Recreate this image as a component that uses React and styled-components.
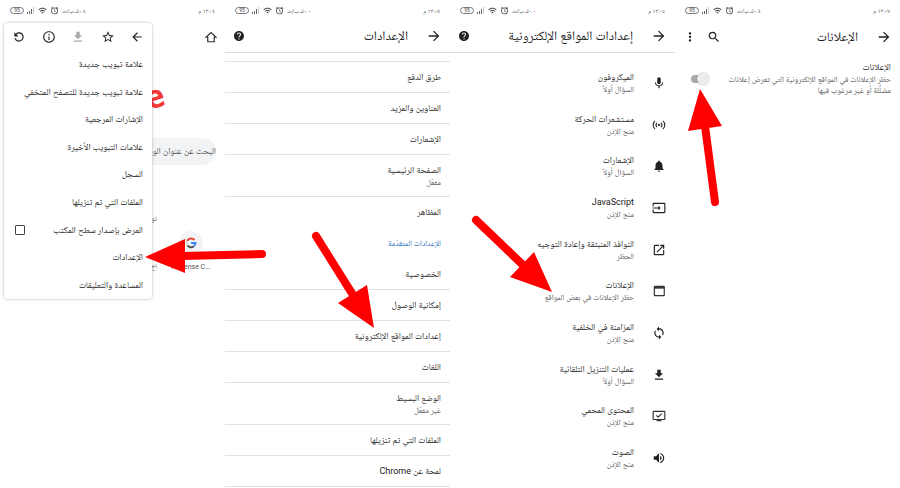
import styled, { createGlobalStyle } from "styled-components";
import {
  MdAlarm,
  MdArrowBack,
  MdArrowForward,
  MdFileDownload,
  MdHelp,
  MdInfoOutline,
  MdInput,
  MdMic,
  MdMoreVert,
  MdNotifications,
  MdOpenInNew,
  MdRefresh,
  MdSearch,
  MdStarBorder,
  MdSync,
  MdVolumeUp,
  MdWifi,
} from "react-icons/md";

const GlobalStyle = createGlobalStyle`
  * {
    box-sizing: border-box;
  }
  body {
    margin: 0;
    background: #fff;
    color: #222;
    font-family: Roboto, "Noto Naskh Arabic", "DejaVu Sans Condensed", sans-serif;
    font-size: 9px;
    line-height: 13px;
  }
  ul {
    margin: 0;
    padding: 0;
    list-style: none;
  }
  button {
    padding: 0;
    border: 0;
    background: none;
    color: inherit;
    font: inherit;
    cursor: pointer;
  }
  svg {
    display: block;
  }
`;

const Board = styled.main`
  position: relative;
  display: grid;
  grid-template-columns: repeat(4, 1fr);
  min-height: 100vh;
  direction: ltr;
`;

const Screen = styled.section`
  position: relative;
  direction: rtl;
  min-width: 0;
  overflow: hidden;
`;

const StatusRow = styled.div`
  display: flex;
  align-items: center;
  justify-content: space-between;
  height: 20px;
  padding: 0 10px;
  color: #444;
  font-size: 6px;
`;

const StatusIcons = styled.div`
  display: flex;
  flex-direction: row-reverse;
  align-items: center;
  gap: 3px;
`;

const Battery = styled.span`
  width: 14px;
  height: 7px;
  border: 1px solid #777;
  border-radius: 4px;
  font-size: 5px;
  line-height: 5px;
  text-align: center;
`;

const TopBar = styled.header`
  display: flex;
  align-items: center;
  gap: 18px;
  height: 33px;
  padding: 0 8px;
  color: #222;
  border-bottom: ${(p) => (p.$line ? "1px solid #ddd" : "0")};
  h1 {
    flex: 1;
    margin: 0;
    font-size: 13px;
    font-weight: 400;
    line-height: 20px;
    white-space: nowrap;
  }
`;

const Actions = styled.div`
  display: flex;
  align-items: center;
  gap: 10px;
`;

const Title = styled.span`
  display: block;
`;

const Summary = styled.span`
  display: block;
  color: #555;
  font-size: 8px;
  line-height: 11px;
`;

const SettingsList = styled.ul`
  margin-top: 8px;
  border-top: 1px solid #e2e2e2;
`;

const Setting = styled.li`
  display: flex;
  flex-direction: column;
  justify-content: center;
  min-height: ${(p) => (p.$tall ? 42 : 31)}px;
  padding: 0 9px;
  border-bottom: ${(p) => (p.$plain ? "0" : "1px solid #e2e2e2")};
`;

const SectionName = styled.h2`
  margin: 0;
  color: #1a6bb8;
  font-size: 8px;
  font-weight: 400;
`;

const SiteList = styled.ul`
  display: grid;
  grid-auto-rows: 1fr;
  min-height: 417px;
  margin-top: 9px;
`;

const Site = styled.li`
  display: flex;
  align-items: center;
  gap: 18px;
  padding: 0 9px;
`;

const Menu = styled.nav`
  position: absolute;
  top: 23px;
  left: 4px;
  width: 148px;
  background: #fff;
  border-radius: 3px;
  box-shadow: 0 0 3px rgba(0, 0, 0, 0.3);
`;

const MenuTools = styled.div`
  display: flex;
  align-items: center;
  justify-content: space-between;
  height: 28px;
  padding: 0 8px;
`;

const ReloadIcon = styled(MdRefresh)`
  transform: scaleX(-1);
`;

const MenuList = styled.ul`
  display: grid;
  grid-auto-rows: 1fr;
  min-height: 248px;
`;

const MenuItem = styled.li`
  display: flex;
  align-items: center;
  justify-content: space-between;
  padding: 0 9px;
  white-space: nowrap;
`;

const CheckBox = styled.input`
  appearance: none;
  width: 10px;
  height: 10px;
  margin: 0 2px;
  border: 1px solid #444;
  border-radius: 1px;
`;

const NewTab = styled.div`
  display: flex;
  flex-direction: column;
`;

const HomeBar = styled.div`
  display: flex;
  align-items: center;
  height: 33px;
  padding: 0 8px;
`;

const Logo = styled.div`
  height: 85px;
  padding: 23px 61px 0 0;
  color: #f33a38;
  font: 700 32px/40px "Open Sans", sans-serif;
  span {
    display: inline-block;
    transform: rotate(-18deg);
  }
`;

const SearchBox = styled.input`
  height: 27px;
  margin: 0 9px 0 20px;
  padding: 0;
  border: 0;
  border-radius: 14px;
  background: #f1f3f4;
  font: inherit;
  line-height: 27px;
  &::placeholder {
    color: #555;
    opacity: 1;
  }
`;

const Tiles = styled.div`
  display: grid;
  grid-template-columns: 68px 1fr;
  padding-top: 46px;
  color: #555;
  font-size: 7px;
  line-height: 12px;
`;

const Tile = styled.a`
  display: flex;
  flex-direction: column;
  align-items: center;
  gap: 6px;
  padding-top: 20px;
  color: inherit;
  text-decoration: none;
`;

const TileIcon = styled.span`
  display: flex;
  align-items: center;
  justify-content: center;
  width: 24px;
  height: 24px;
  border-radius: 50%;
  background: #f1f3f4;
`;

const Snippets = styled.div`
  display: flex;
  flex-direction: column;
  gap: 36px;
  padding-top: 2px;
`;

const AdsRow = styled.label`
  display: flex;
  align-items: center;
  justify-content: space-between;
  gap: 18px;
  padding: 8px 9px 8px 16px;
`;

const Switch = styled.input`
  appearance: none;
  position: relative;
  flex: none;
  width: 17px;
  height: 8px;
  margin: 0;
  border-radius: 4px;
  background: #aaa;
  &::after {
    content: "";
    position: absolute;
    top: -2px;
    right: -1px;
    width: 12px;
    height: 12px;
    border-radius: 50%;
    background: #ececec;
    box-shadow: 0 0 2px rgba(0, 0, 0, 0.3);
  }
`;

const Arrows = styled.svg`
  position: absolute;
  top: 0;
  left: 0;
  fill: #f00;
  stroke: #f00;
  pointer-events: none;
  line {
    stroke-width: 8px;
    stroke-linecap: round;
  }
  polygon {
    stroke: none;
  }
`;

const SignalIcon = () => (
  <svg width="8" height="7" viewBox="0 0 8 7" fill="#666">
    <rect x="0" y="5" width="1" height="2" />
    <rect x="2" y="4" width="1" height="3" />
    <rect x="4" y="2" width="1" height="5" />
    <rect x="6" y="0" width="1" height="7" fill="#ccc" />
  </svg>
);

const HomeIcon = () => (
  <svg width="12" height="12" viewBox="0 0 24 24" fill="none" stroke="#333" strokeWidth="2.4">
    <path d="M2 12.500 12 3 22 12.500H18.500V21.500H5.500V12.500Z" />
  </svg>
);

const SensorsIcon = () => (
  <svg width="14" height="14" viewBox="0 0 24 24" fill="none" stroke="#333" strokeWidth="2">
    <circle cx="12" cy="12" r="2" fill="#333" stroke="none" />
    <path d="M8.500 8.500a5 5 0 0 0 0 7M15.500 8.500a5 5 0 0 1 0 7M5 5a10 10 0 0 0 0 14M19 5a10 10 0 0 1 0 14" />
  </svg>
);

const WindowIcon = () => (
  <svg width="14" height="14" viewBox="0 0 24 24" fill="none" stroke="#333" strokeWidth="2">
    <rect x="4" y="4" width="17" height="16" rx="1" />
    <path d="M4 6H21" strokeWidth="4" />
  </svg>
);

const ProtectedIcon = () => (
  <svg width="14" height="14" viewBox="0 0 24 24" fill="none" stroke="#333" strokeWidth="2">
    <rect x="2" y="4" width="20" height="14" rx="1" />
    <path d="M8 20H16M7.500 11l3 3 6-6" />
  </svg>
);

const GoogleIcon = () => (
  <svg width="12" height="12" viewBox="0 0 24 24" fill="none" strokeWidth="4">
    <path d="M19 6A9 9 0 0 0 4 8" stroke="#ea4335" />
    <path d="M4 8A9 9 0 0 0 5 17" stroke="#ddd" />
    <path d="M5 17A9 9 0 0 0 17 19" stroke="#444" />
    <path d="M17 19A9 9 0 0 0 21 12H12" stroke="#4285f4" />
  </svg>
);

const StatusBar = ({ time, rate }) => (
  <StatusRow>
    <span>{time}</span>
    <StatusIcons>
      <Battery>95</Battery>
      <SignalIcon />
      <MdWifi size={9} />
      <MdAlarm size={9} />
      <span>{rate}</span>
    </StatusIcons>
  </StatusRow>
);

const Header = ({ title, line, children }) => (
  <TopBar $line={line}>
    <button aria-label="رجوع">
      <MdArrowForward size={16} />
    </button>
    <h1>{title}</h1>
    <Actions>{children}</Actions>
  </TopBar>
);

const menuItems = [
  "علامة تبويب جديدة",
  "علامة تبويب جديدة للتصفح المتخفي",
  "الإشارات المرجعية",
  "علامات التبويب الأخيرة",
  "السجل",
  "الملفات التي تم تنزيلها",
  "العرض بإصدار سطح المكتب",
  "الإعدادات",
  "المساعدة والتعليقات",
];

const settings = [
  { title: "طرق الدفع" },
  { title: "العناوين والمزيد" },
  { title: "الإشعارات" },
  { title: "الصفحة الرئيسية", summary: "مفعّل" },
  { title: "المظاهر", plain: true },
  { section: "الإعدادات المتقدّمة", plain: true },
  { title: "الخصوصية" },
  { title: "إمكانية الوصول" },
  { title: "إعدادات المواقع الإلكترونية" },
  { title: "اللغات" },
  { title: "الوضع البسيط", summary: "غير مفعّل" },
  { title: "الملفات التي تم تنزيلها" },
  { title: "لمحة عن Chrome" },
];

const sites = [
  [MdMic, "الميكروفون", "السؤال أولاً"],
  [SensorsIcon, "مستشعرات الحركة", "منح الإذن"],
  [MdNotifications, "الإشعارات", "السؤال أولاً"],
  [MdInput, "JavaScript", "منح الإذن"],
  [MdOpenInNew, "النوافذ المنبثقة وإعادة التوجيه", "الحظر"],
  [WindowIcon, "الإعلانات", "حظر الإعلانات في بعض المواقع"],
  [MdSync, "المزامنة في الخلفية", "منح الإذن"],
  [MdFileDownload, "عمليات التنزيل التلقائية", "السؤال أولاً"],
  [ProtectedIcon, "المحتوى المحمي", "منح الإذن"],
  [MdVolumeUp, "الصوت", "منح الإذن"],
];

function App() {
  return (
    <>
      <GlobalStyle />
      <Board>
        <Screen>
          <StatusBar time="١٢:٠٤ م" rate="٠.٤ك.ب/ث" />
          <NewTab>
            <HomeBar>
              <button aria-label="الصفحة الرئيسية">
                <HomeIcon />
              </button>
            </HomeBar>
            <Logo>
              <span>e</span>
            </Logo>
            <SearchBox aria-label="البحث" placeholder="البحث عن عنوان الويب" />
            <Tiles>
              <Tile href="#">
                <TileIcon>
                  <GoogleIcon />
                </TileIcon>
                <span dir="ltr">AdSense C...</span>
              </Tile>
              <Snippets>
                <span>توا</span>
                <span>اخ</span>
              </Snippets>
            </Tiles>
          </NewTab>
          <Menu>
            <MenuTools>
              <button aria-label="للأمام">
                <MdArrowBack size={14} />
              </button>
              <button aria-label="إشارة مرجعية">
                <MdStarBorder size={14} />
              </button>
              <button aria-label="تنزيل" disabled>
                <MdFileDownload size={14} color="#aaa" />
              </button>
              <button aria-label="معلومات">
                <MdInfoOutline size={14} />
              </button>
              <button aria-label="إعادة تحميل">
                <ReloadIcon size={14} />
              </button>
            </MenuTools>
            <MenuList>
              {menuItems.map((item, i) => (
                <MenuItem key={item}>
                  {i === 6 ? (
                    <>
                      <label htmlFor="desktop">{item}</label>
                      <CheckBox id="desktop" type="checkbox" />
                    </>
                  ) : (
                    <button>{item}</button>
                  )}
                </MenuItem>
              ))}
            </MenuList>
          </Menu>
        </Screen>

        <Screen>
          <StatusBar time="١٢:٠٨ م" rate="٠.٠ك.ب/ث" />
          <Header title="الإعدادات" line>
            <button aria-label="مساعدة">
              <MdHelp size={12} />
            </button>
          </Header>
          <SettingsList>
            {settings.map(({ title, summary, section, plain }) => (
              <Setting key={title || section} $tall={summary} $plain={plain}>
                {section && <SectionName>{section}</SectionName>}
                {title && <Title>{title}</Title>}
                {summary && <Summary>{summary}</Summary>}
              </Setting>
            ))}
          </SettingsList>
        </Screen>

        <Screen>
          <StatusBar time="١٢:٠٥ م" rate="٠.٠ك.ب/ث" />
          <Header title="إعدادات المواقع الإلكترونية" line>
            <button aria-label="مساعدة">
              <MdHelp size={12} />
            </button>
          </Header>
          <SiteList>
            {sites.map(([Icon, title, summary]) => (
              <Site key={title}>
                <Icon size={14} />
                <div>
                  <Title>{title}</Title>
                  <Summary>{summary}</Summary>
                </div>
              </Site>
            ))}
          </SiteList>
        </Screen>

        <Screen>
          <StatusBar time="١٢:٠٧ م" rate="٠.٤ك.ب/ث" />
          <Header title="الإعلانات">
            <button aria-label="بحث">
              <MdSearch size={14} />
            </button>
            <button aria-label="المزيد">
              <MdMoreVert size={14} />
            </button>
          </Header>
          <AdsRow htmlFor="ads">
            <div>
              <Title>الإعلانات</Title>
              <Summary>
                حظر الإعلانات في المواقع الإلكترونية التي تعرض إعلانات
                مضلِّلة أو غير مرغوب فيها
              </Summary>
            </div>
            <Switch id="ads" type="checkbox" />
          </AdsRow>
        </Screen>

        <Arrows width="900" height="488" viewBox="0 0 900 488">
          <line x1="262" y1="254" x2="182" y2="256" />
          <polygon points="145,257 185,239 185,273" />
          <line x1="316" y1="236" x2="353" y2="295" />
          <polygon points="374,328 367,285 338,303" />
          <line x1="476" y1="220" x2="523" y2="265" />
          <polygon points="552,292 534,252 510,277" />
          <line x1="715" y1="202" x2="705" y2="126" />
          <polygon points="700,89 688,131 722,126" />
        </Arrows>
      </Board>
    </>
  );
}

export default App;
